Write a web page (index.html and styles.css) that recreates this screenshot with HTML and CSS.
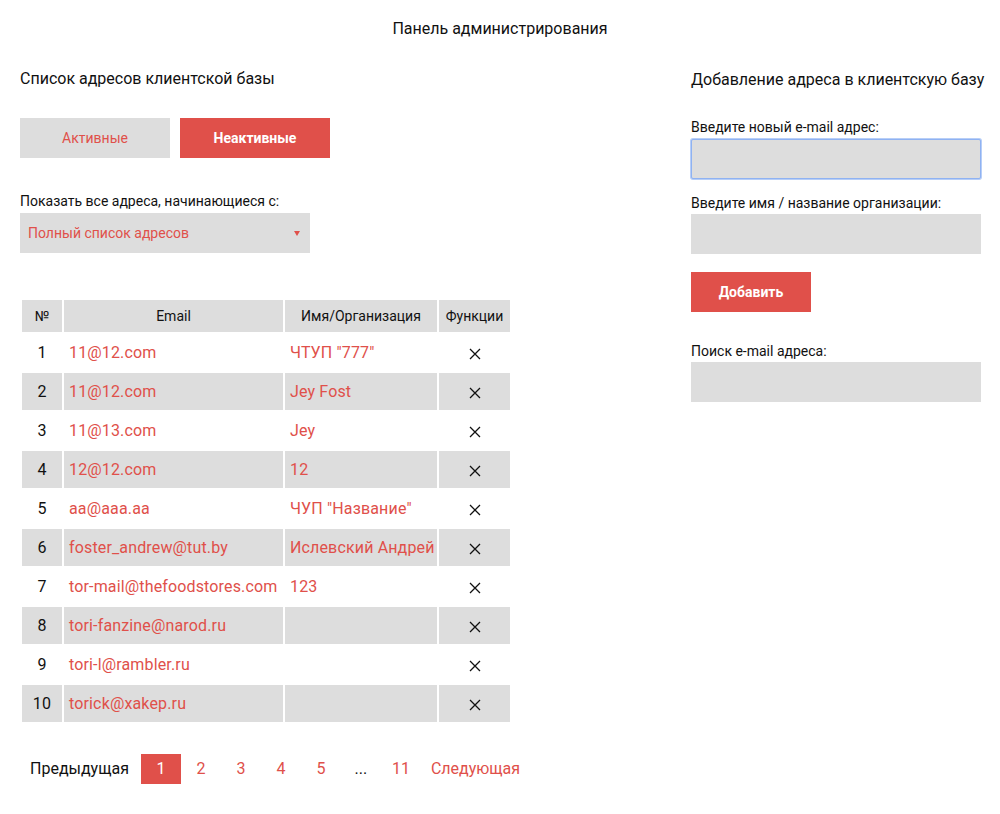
FILE: index.html
```html
<!DOCTYPE html>
<html lang="ru">
<head>
<meta charset="utf-8">
<title>Панель администрирования</title>
<link rel="stylesheet" href="styles.css">
</head>
<body>
<header class="top">Панель администрирования</header>
<div class="columns">
  <section class="left">
    <h2 class="heading">Список адресов клиентской базы</h2>
    <div class="tabs">
      <button class="tab tab-off">Активные</button>
      <button class="tab tab-on">Неактивные</button>
    </div>
    <label class="label">Показать все адреса, начинающиеся с:</label>
    <div class="select">
      <span>Полный список адресов</span>
      <span class="arrow"></span>
    </div>
    <table class="list">
      <colgroup><col class="w-num"><col class="w-mail"><col class="w-name"><col class="w-fn"></colgroup>
      <thead>
        <tr><th class="c-num">№</th><th>Email</th><th>Имя/Организация</th><th class="c-fn">Функции</th></tr>
      </thead>
      <tbody>
        <tr><td class="c-num">1</td><td>11@12.com</td><td>ЧТУП "777"</td><td class="c-fn"><svg class="x" viewBox="0 0 12 12"><path d="M1 1L11 11M11 1L1 11"/></svg></td></tr>
        <tr class="odd"><td class="c-num">2</td><td>11@12.com</td><td>Jey Fost</td><td class="c-fn"><svg class="x" viewBox="0 0 12 12"><path d="M1 1L11 11M11 1L1 11"/></svg></td></tr>
        <tr><td class="c-num">3</td><td>11@13.com</td><td>Jey</td><td class="c-fn"><svg class="x" viewBox="0 0 12 12"><path d="M1 1L11 11M11 1L1 11"/></svg></td></tr>
        <tr class="odd"><td class="c-num">4</td><td>12@12.com</td><td>12</td><td class="c-fn"><svg class="x" viewBox="0 0 12 12"><path d="M1 1L11 11M11 1L1 11"/></svg></td></tr>
        <tr><td class="c-num">5</td><td>aa@aaa.aa</td><td>ЧУП "Название"</td><td class="c-fn"><svg class="x" viewBox="0 0 12 12"><path d="M1 1L11 11M11 1L1 11"/></svg></td></tr>
        <tr class="odd"><td class="c-num">6</td><td>foster_andrew@tut.by</td><td>Ислевский Андрей</td><td class="c-fn"><svg class="x" viewBox="0 0 12 12"><path d="M1 1L11 11M11 1L1 11"/></svg></td></tr>
        <tr><td class="c-num">7</td><td>tor-mail@thefoodstores.com</td><td>123</td><td class="c-fn"><svg class="x" viewBox="0 0 12 12"><path d="M1 1L11 11M11 1L1 11"/></svg></td></tr>
        <tr class="odd"><td class="c-num">8</td><td>tori-fanzine@narod.ru</td><td></td><td class="c-fn"><svg class="x" viewBox="0 0 12 12"><path d="M1 1L11 11M11 1L1 11"/></svg></td></tr>
        <tr><td class="c-num">9</td><td>tori-l@rambler.ru</td><td></td><td class="c-fn"><svg class="x" viewBox="0 0 12 12"><path d="M1 1L11 11M11 1L1 11"/></svg></td></tr>
        <tr class="odd"><td class="c-num">10</td><td>torick@xakep.ru</td><td></td><td class="c-fn"><svg class="x" viewBox="0 0 12 12"><path d="M1 1L11 11M11 1L1 11"/></svg></td></tr>
      </tbody>
    </table>
    <nav class="pager">
      <span class="pg pg-text">Предыдущая</span>
      <span class="pg pg-cur">1</span>
      <span class="pg pg-link">2</span>
      <span class="pg pg-link">3</span>
      <span class="pg pg-link">4</span>
      <span class="pg pg-link">5</span>
      <span class="pg pg-dots">...</span>
      <span class="pg pg-link">11</span>
      <span class="pg pg-link">Следующая</span>
    </nav>
  </section>
  <section class="right">
    <h2 class="heading">Добавление адреса в клиентскую базу</h2>
    <label class="label label-first">Введите новый e-mail адрес:</label>
    <div class="field field-focus"></div>
    <label class="label label-next">Введите имя / название организации:</label>
    <div class="field"></div>
    <button class="add">Добавить</button>
    <label class="label label-search">Поиск e-mail адреса:</label>
    <div class="field"></div>
  </section>
</div>
</body>
</html>
```

FILE: styles.css
```css
* { box-sizing: border-box; }
html, body {
  margin: 0;
  padding: 0;
  background: #fff;
  font-family: Roboto, "Liberation Sans", sans-serif;
  color: #111;
  overflow: hidden;
}
.top {
  text-align: center;
  font-size: 16px;
  line-height: 20px;
  padding-top: 19px;
  height: 39px;
}
.columns {
  display: flex;
  padding-left: 20px;
  padding-top: 30px;
}
.left {
  flex: 0 0 671px;
}
.right {
  flex: 1;
  white-space: nowrap;
}
.heading {
  margin: 0;
  font-size: 16px;
  font-weight: normal;
  line-height: 20px;
  height: 20px;
}
.right .heading { margin-top: 1px; }
.tabs {
  display: flex;
  gap: 10px;
  margin-top: 29px;
}
.tab {
  width: 150px;
  height: 40px;
  border: 0;
  font-family: Roboto, "Liberation Sans", sans-serif;
  font-size: 14px;
  padding: 0;
}
.tab-off { background: #dddddd; color: #e0504a; }
.tab-on { background: #e0504a; color: #fff; font-weight: 700; }
.label {
  display: block;
  font-size: 14px;
  line-height: 16px;
  color: #111;
}
.left .label { margin-top: 35px; }
.select {
  width: 290px;
  height: 40px;
  background: #dddddd;
  color: #e0504a;
  font-size: 14px;
  display: flex;
  align-items: center;
  justify-content: space-between;
  padding: 0 8px 0 8px;
  margin-top: 4px;
}
.arrow {
  width: 0;
  height: 0;
  border-left: 3px solid transparent;
  border-right: 3px solid transparent;
  border-top: 5px solid #e0504a;
  margin-right: 2px;
}
.list {
  margin-top: 45px;
  border-collapse: separate;
  border-spacing: 2px;
  font-size: 16px;
  table-layout: fixed;
  width: 492px;
}
.w-num { width: 40px; }
.w-mail { width: 219px; }
.w-name { width: 152px; }
.w-fn { width: 71px; }
.list th {
  background: #dddddd;
  font-weight: normal;
  font-size: 14px;
  height: 32px;
  padding: 0;
  color: #111;
  white-space: nowrap;
}
.list td {
  height: 37px;
  padding: 0 5px;
  color: #e0504a;
  white-space: nowrap;
  letter-spacing: 0.15px;
  overflow: visible;
}
.list tr.odd td { background: #dddddd; }
.list .c-num { text-align: center; color: #111; padding: 0; }
.list .c-fn { text-align: center; padding: 0; }
.x {
  width: 12px;
  height: 12px;
  display: inline-block;
  vertical-align: middle;
  fill: none;
  stroke: #111;
  stroke-width: 1.3;
}
.pager {
  display: flex;
  align-items: center;
  margin-top: 30px;
  font-size: 16px;
}
.pg {
  min-width: 40px;
  padding: 0 10px;
  height: 30px;
  line-height: 30px;
  text-align: center;
}
.pg-text { padding-right: 12px; }
.pg-text, .pg-dots { color: #111; }
.pg-cur { background: #e0504a; color: #fff; }
.pg-link { color: #e0504a; }
.label-first { margin-top: 29px; }
.label-next { margin-top: 16px; }
.label-search { margin-top: 31px; }
.field {
  width: 290px;
  height: 40px;
  background: #dddddd;
  margin-top: 3px;
}
.field-focus {
  border: 1px solid #8fb2f2;
  border-radius: 2px;
  box-shadow: 0 0 0 1px #b7cef7;
  margin-top: 4px;
}
.add {
  display: block;
  margin-top: 18px;
  width: 120px;
  height: 40px;
  border: 0;
  background: #e0504a;
  color: #fff;
  font-family: Roboto, "Liberation Sans", sans-serif;
  font-size: 14px;
  font-weight: 700;
  padding: 0;
}
```
